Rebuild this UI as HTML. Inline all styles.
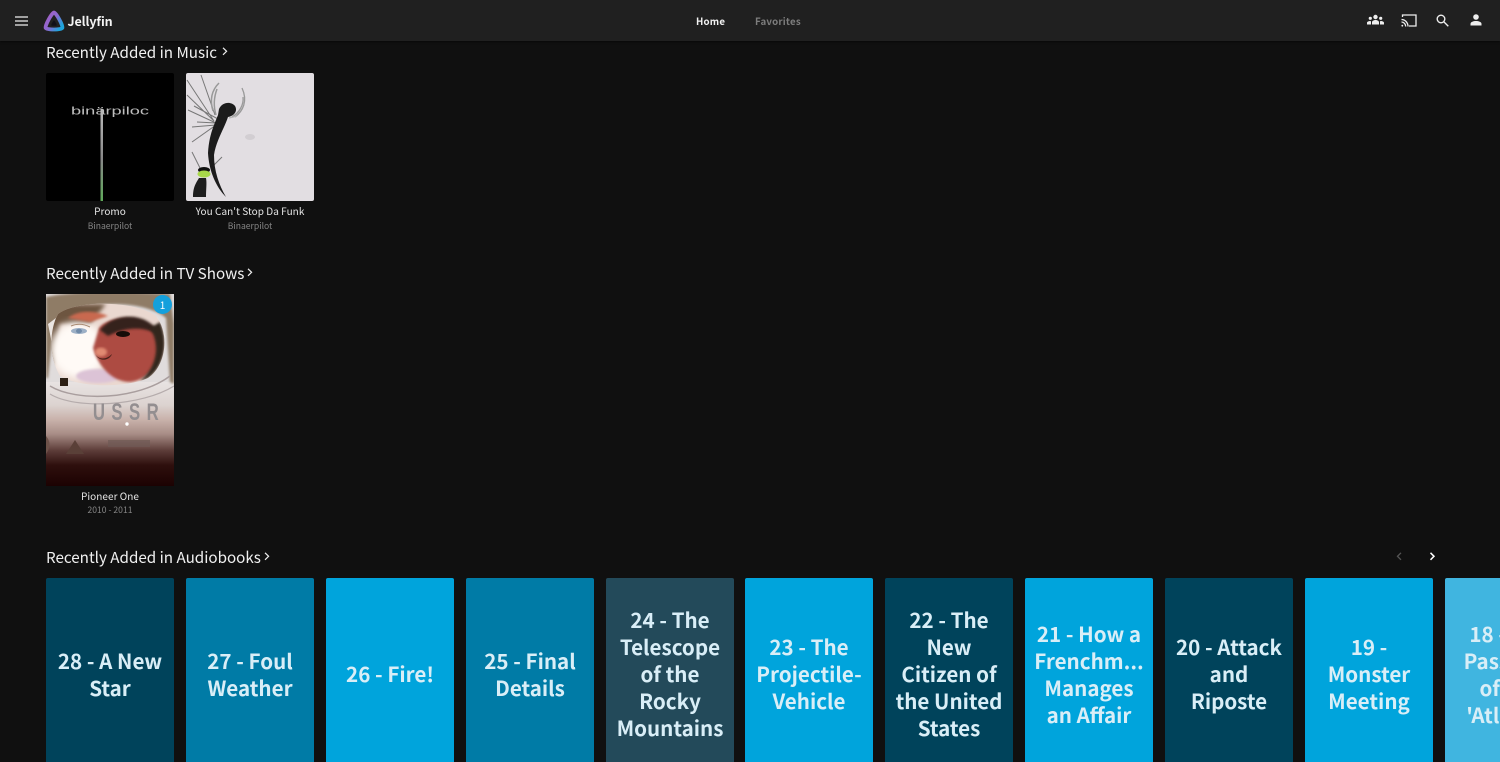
<!DOCTYPE html>
<html lang="en"><head><meta charset="utf-8"><title>Jellyfin</title>
<style>
*{box-sizing:border-box}
html,body{margin:0;padding:0;width:1500px;height:762px;overflow:hidden;background:#101010;color:#fff;font-family:"Noto Sans CJK JP","Liberation Sans",sans-serif}
#page{position:relative;width:1500px;height:762px;overflow:hidden;background:#101010}
.a{position:absolute;white-space:nowrap}
#hdr{position:absolute;left:0;top:0;width:1500px;height:41px;background:#202020;box-shadow:0 1px 2px rgba(0,0,0,.5)}
.h2{font-size:15.2px;line-height:20px;color:#f0f0f0}
.t1{font-size:10px;line-height:14px;color:#e6e6e6;text-align:center;width:128px;letter-spacing:.05px}
.t2{font-size:8.6px;line-height:14px;color:#858585;text-align:center;width:128px}
.card{position:absolute;top:578px;width:128px;height:192px;border-radius:2px;display:flex;align-items:center;justify-content:center;text-align:center;font-weight:700;font-size:20.6px;line-height:27px;color:#d9eef7;overflow:hidden;white-space:nowrap;padding-bottom:1px}
</style></head><body><div id="page">
<div id="hdr"></div>
<svg class="a" style="left:15px;top:16px" width="13" height="10" viewBox="0 0 13 10"><path d="M0 1h13M0 5h13M0 9h13" stroke="#eee" stroke-width="1.3"/></svg>
<svg class="a" style="left:43px;top:10px" width="22" height="22" viewBox="0 0 22 22"><defs><linearGradient id="g" x1="0" y1="0" x2="1" y2=".7"><stop offset="0" stop-color="#aa5cc3"/><stop offset=".55" stop-color="#8a6ad0"/><stop offset="1" stop-color="#1fa4dc"/></linearGradient></defs><path d="M11 2.500C9 2.500 1.500 16 2.700 18C4 20 18 20 19.300 18C20.500 16 13 2.500 11 2.500Z" fill="none" stroke="url(#g)" stroke-width="3.800" stroke-linejoin="round"/><path d="M11 10.500C10.300 10.500 8 14.500 8.300 15.200C8.700 16 13.300 16 13.700 15.200C14 14.500 11.700 10.500 11 10.500Z" fill="#101018"/></svg>
<div class="a" style="left:67.500px;top:9px;font-size:12.500px;line-height:24px;font-weight:700;color:#f4f4f4;letter-spacing:-.1px">Jellyfin</div>
<div class="a" style="left:696px;top:13px;font-size:9.700px;line-height:16px;font-weight:700;color:#f2f2f2;letter-spacing:.2px">Home</div>
<div class="a" style="left:755px;top:13px;font-size:9.700px;line-height:16px;font-weight:700;color:#7d7d7d;letter-spacing:.2px">Favorites</div>
<svg class="a" style="left:1367px;top:14px" width="17" height="12" viewBox="0 0 17 12" fill="#eee"><circle cx="8.500" cy="3" r="2.200"/><circle cx="3.300" cy="4.300" r="1.600"/><circle cx="13.700" cy="4.300" r="1.600"/><path d="M5 10.500V8.300C5 6.800 7 6 8.500 6S12 6.800 12 8.300V10.500ZM0 10.500V8.800C0 7.600 1.700 7 3.500 7L4 7.500V10.500ZM17 10.500V8.800C17 7.600 15.300 7 13.500 7L13 7.500V10.500Z"/></svg>
<svg class="a" style="left:1401px;top:14px" width="16" height="13" viewBox="0 0 16 13" fill="none" stroke="#eee" stroke-width="1.300"><path d="M1.500 3V1H15V12H8"/><path d="M.500 5.500C4 5.500 7 8.500 7 12.500M.500 8C2.800 8 4.700 10 4.700 12.500"/><circle cx="1.300" cy="11.700" r=".9" fill="#eee" stroke="none"/></svg>
<svg class="a" style="left:1436px;top:14px" width="13" height="13" viewBox="0 0 13 13" fill="none" stroke="#eee" stroke-width="1.400"><circle cx="5" cy="5" r="3.800"/><path d="M7.800 7.800L12.300 12.300"/></svg>
<svg class="a" style="left:1470px;top:14px" width="12" height="12" viewBox="0 0 12 12" fill="#eee"><circle cx="6" cy="3" r="2.800"/><path d="M.500 11.500V9.700C.500 8 3.500 7 6 7S11.500 8 11.500 9.700V11.500Z"/></svg>

<div class="a h2" style="left:46px;top:42px">Recently Added in Music</div>
<svg class="a" style="left:222px;top:47px" width="6" height="9" viewBox="0 0 6 9"><path d="M1 .8L4.600 4.300L1 7.800" fill="none" stroke="#eee" stroke-width="1.200"/></svg>

<svg class="a" style="left:46px;top:73px" width="128" height="128" viewBox="0 0 128 128"><rect width="128" height="128" rx="2" fill="#000"/>
<text x="64" y="41.500" text-anchor="middle" font-family="Liberation Sans,sans-serif" font-size="11" fill="#bdbdbd" textLength="78" lengthAdjust="spacingAndGlyphs">binärpiloc</text>
<defs><linearGradient id="l" x1="0" y1="0" x2="0" y2="1"><stop offset="0" stop-color="#bbb"/><stop offset=".55" stop-color="#888"/><stop offset="1" stop-color="#5fa85a"/></linearGradient></defs>
<rect x="54.500" y="36" width="2.500" height="92" fill="url(#l)"/></svg>

<svg class="a" style="left:186px;top:73px" width="128" height="128" viewBox="0 0 128 128"><rect width="128" height="128" rx="2" fill="#e2dee2"/>
<g fill="none" stroke="#777" stroke-width="1"><path d="M28 48L1 7M29 42L15 2M28 48L1 22M30 50L2 37M30 52L6 54M30 52L6 69M30 50L11 49M32 46L8 33M14 95L6 79M26 94L36 84"/></g>
<path d="M27 38C24 28 25 18 33 10M30 42C27 32 28 24 31 16" fill="none" stroke="#999" stroke-width="1.500"/>
<path d="M49 44C57 38 62 28 56 15M46 44C53 40 58 32 57 24" fill="none" stroke="#999" stroke-width="1.300"/>
<path d="M33 36C36 29 45 28 49 33C52 38 48 43 42 44C38 56 30 68 28 82C28 98 33 112 40 124C30 114 23 98 22 80C23 62 28 52 32 42Z" fill="#1c1c1c"/>
<path d="M43 45L51 43" stroke="#b5b5b5" stroke-width="1.400"/>
<ellipse cx="18" cy="97" rx="6" ry="3" fill="#111"/><ellipse cx="18" cy="101" rx="6.500" ry="3.500" fill="#a8d84a"/>
<path d="M13 105C10 110 7 114 7 124H20C20 116 21 110 20 105Z" fill="#1e1e1e"/>
<ellipse cx="64" cy="64" rx="5" ry="3" fill="#d2ced2"/></svg>

<div class="a t1" style="left:46px;top:204px">Promo</div>
<div class="a t2" style="left:46px;top:219px">Binaerpilot</div>
<div class="a t1" style="left:186px;top:204px">You Can't Stop Da Funk</div>
<div class="a t2" style="left:186px;top:219px">Binaerpilot</div>

<div class="a h2" style="left:46px;top:263px">Recently Added in TV Shows</div>
<svg class="a" style="left:247px;top:268px" width="6" height="9" viewBox="0 0 6 9"><path d="M1 .8L4.600 4.300L1 7.800" fill="none" stroke="#eee" stroke-width="1.200"/></svg>

<svg class="a" style="left:46px;top:294px" width="128" height="192" viewBox="0 0 128 192"><defs>
<linearGradient id="low" x1="0" y1="0" x2="0" y2="1"><stop offset="0" stop-color="#e8e3e2"/><stop offset=".22" stop-color="#dcd3d0"/><stop offset=".36" stop-color="#c9b2ab"/><stop offset=".5" stop-color="#a88d86"/><stop offset=".66" stop-color="#5c3c38"/><stop offset=".8" stop-color="#2e0f0d"/><stop offset="1" stop-color="#1c0202"/></linearGradient>
<filter id="b"><feGaussianBlur stdDeviation="4"/></filter><filter id="b1"><feGaussianBlur stdDeviation="1.200"/></filter><filter id="b2"><feGaussianBlur stdDeviation="2"/></filter>
<clipPath id="vis"><path d="M12 20C30 6 88 6 110 22C124 40 120 72 102 84C80 94 34 94 14 82C3 64 3 36 12 20Z"/></clipPath></defs>
<rect width="128" height="192" fill="#e0dcdc"/>
<rect y="88" width="128" height="104" fill="url(#low)"/>
<path d="M0 3C30-4 90-2 124 0L128 30V90L124 88L120 24C100 6 34 4 8 28L2 84L0 84Z" fill="#8f7b66" filter="url(#b1)"/>
<path d="M2 30L10 24C30 8 90 8 112 24L120 44L108 26C88 12 34 12 14 26L6 50Z" fill="#ece6e2"/>
<g clip-path="url(#vis)">
<rect width="128" height="100" fill="#ead8d0"/>
<path d="M6 10H60L44 30H14L9 70H0V10Z" fill="#6d5541" filter="url(#b2)"/>
<ellipse cx="32" cy="56" rx="28" ry="28" fill="#fffaf6" filter="url(#b)"/>
<path d="M22 24C32 16 48 16 62 22L44 28Z" fill="#c9694f" filter="url(#b1)"/>
<ellipse cx="52" cy="82" rx="22" ry="7" fill="#dcc3d6" filter="url(#b1)"/>
<path d="M53 34C62 22 100 18 114 44C120 64 104 86 84 88C66 88 52 72 47 54Z" fill="#ad4c42" filter="url(#b1)"/>
<path d="M54 36C68 18 104 16 116 44C106 34 84 30 62 42Z" fill="#35231a" filter="url(#b1)"/>
<path d="M104 34C114 50 112 72 94 87C112 84 126 56 114 28Z" fill="#33251a" filter="url(#b1)"/>
<ellipse cx="77" cy="40" rx="7" ry="3" fill="#170c08"/>
<ellipse cx="33" cy="37" rx="8" ry="3" fill="#9db0c6"/><ellipse cx="33" cy="37" rx="3" ry="2.300" fill="#708aa8"/>
<path d="M25 32Q34 28 44 33" fill="none" stroke="#a98a72" stroke-width="1"/>
<ellipse cx="55" cy="58" rx="6" ry="4.500" fill="#e08a72" filter="url(#b1)"/>
<path d="M49 60C53 66 60 66 66 60C64 66 54 69 49 60Z" fill="#47211a"/>
</g>
<rect x="14" y="84" width="8" height="8" fill="#2d2015"/>
<path d="M4 92C30 108 92 106 124 82" fill="none" stroke="#a99e9e" stroke-width="1.500"/><path d="M4 100C30 116 96 112 128 92" fill="none" stroke="#b5acac" stroke-width="1.200"/>
<text transform="scale(.7 1)" x="67" y="126" font-family="Liberation Sans,sans-serif" font-size="24" font-weight="700" fill="#938e90" textLength="94">USSR</text>
<circle cx="81" cy="130" r="1.700" fill="#fff"/>
<path d="M20 160L29 146L38 160Z" fill="#5a4038"/><path d="M0 142Q7 150 0 160Z" fill="#6d5249"/>
<rect x="62" y="146" width="42" height="7" fill="#6f5a55" opacity=".7"/>
</svg>
<div class="a" style="left:153px;top:295px;width:19px;height:19px;border-radius:50%;background:#14a0dc;color:#fff;font-size:10px;line-height:19px;text-align:center">1</div>
<div class="a t1" style="left:46px;top:489px">Pioneer One</div>
<div class="a t2" style="left:46px;top:503px">2010 - 2011</div>

<div class="a h2" style="left:46px;top:547px">Recently Added in Audiobooks</div>
<svg class="a" style="left:264px;top:552px" width="6" height="9" viewBox="0 0 6 9"><path d="M1 .8L4.600 4.300L1 7.800" fill="none" stroke="#eee" stroke-width="1.200"/></svg>
<svg class="a" style="left:1396px;top:552px" width="7" height="9" viewBox="0 0 7 9"><path d="M5 .8L1.500 4.300L5 7.800" fill="none" stroke="#555" stroke-width="1.300"/></svg>
<svg class="a" style="left:1429px;top:552px" width="7" height="9" viewBox="0 0 7 9"><path d="M1.500 .8L5 4.300L1.500 7.800" fill="none" stroke="#fff" stroke-width="1.500"/></svg>

<div class="card" style="left:46px;background:#00435b"><div>28 - A New<br>Star</div></div>
<div class="card" style="left:186px;background:#007ba6"><div>27 - Foul<br>Weather</div></div>
<div class="card" style="left:326px;background:#00a4dc"><div>26 - Fire!</div></div>
<div class="card" style="left:466px;background:#007ba6"><div>25 - Final<br>Details</div></div>
<div class="card" style="left:606px;background:#234a5a"><div>24 - The<br>Telescope<br>of the<br>Rocky<br>Mountains</div></div>
<div class="card" style="left:745px;background:#00a4dc"><div>23 - The<br>Projectile-<br>Vehicle</div></div>
<div class="card" style="left:885px;background:#00435b"><div>22 - The<br>New<br>Citizen of<br>the United<br>States</div></div>
<div class="card" style="left:1025px;background:#00a4dc"><div>21 - How a<br>Frenchm...<br>Manages<br>an Affair</div></div>
<div class="card" style="left:1165px;background:#00435b"><div>20 - Attack<br>and<br>Riposte</div></div>
<div class="card" style="left:1305px;background:#00a4dc"><div>19 -<br>Monster<br>Meeting</div></div>
<div class="card" style="left:1445px;background:#40b5e0"><div>18 - The<br>Passen...<br>of the<br>'Atlanta'</div></div>
</div></body></html>
